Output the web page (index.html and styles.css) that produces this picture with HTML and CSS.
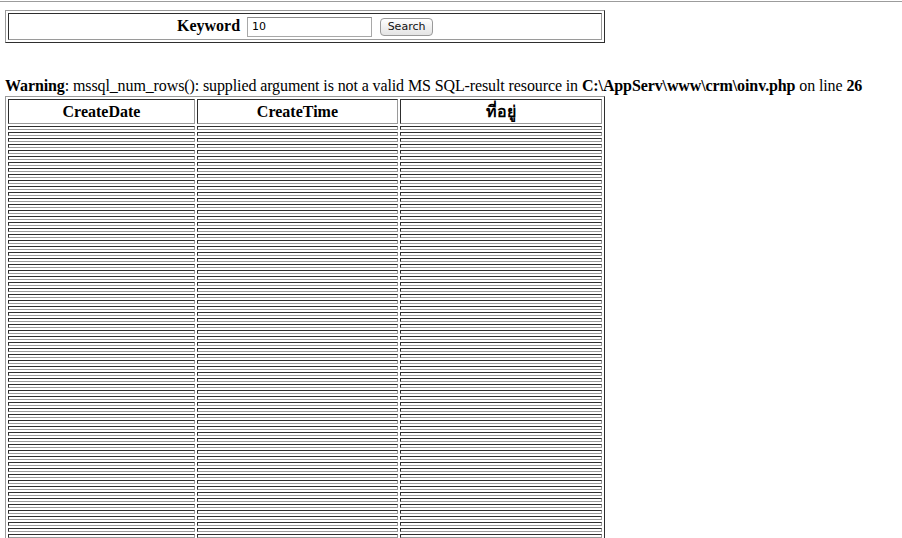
FILE: index.html
```html
<!DOCTYPE html>
<html>
<head>
<meta charset="utf-8">
<link rel="stylesheet" href="styles.css">
</head>
<body>
<div class="topline"></div>
<form class="search">
<table class="frame">
<tr><td class="kw-cell"><b class="kw">Keyword</b> <input class="kw-input" type="text" value="10"> <button class="btn" type="button">Search</button></td></tr>
</table>
</form>
<p class="warn"><b>Warning</b>: mssql_num_rows(): supplied argument is not a valid MS SQL-result resource in <b>C:\AppServ\www\crm\oinv.php</b> on line <b>26</b></p>
<table class="grid">
<tr><th class="c1">CreateDate</th><th class="c2">CreateTime</th><th class="c3">ที่อยู่</th></tr>
<tr><td></td><td></td><td></td></tr><tr><td></td><td></td><td></td></tr><tr><td></td><td></td><td></td></tr><tr><td></td><td></td><td></td></tr><tr><td></td><td></td><td></td></tr>
<tr><td></td><td></td><td></td></tr><tr><td></td><td></td><td></td></tr><tr><td></td><td></td><td></td></tr><tr><td></td><td></td><td></td></tr><tr><td></td><td></td><td></td></tr>
<tr><td></td><td></td><td></td></tr><tr><td></td><td></td><td></td></tr><tr><td></td><td></td><td></td></tr><tr><td></td><td></td><td></td></tr><tr><td></td><td></td><td></td></tr>
<tr><td></td><td></td><td></td></tr><tr><td></td><td></td><td></td></tr><tr><td></td><td></td><td></td></tr><tr><td></td><td></td><td></td></tr><tr><td></td><td></td><td></td></tr>
<tr><td></td><td></td><td></td></tr><tr><td></td><td></td><td></td></tr><tr><td></td><td></td><td></td></tr><tr><td></td><td></td><td></td></tr><tr><td></td><td></td><td></td></tr>
<tr><td></td><td></td><td></td></tr><tr><td></td><td></td><td></td></tr><tr><td></td><td></td><td></td></tr><tr><td></td><td></td><td></td></tr><tr><td></td><td></td><td></td></tr>
<tr><td></td><td></td><td></td></tr><tr><td></td><td></td><td></td></tr><tr><td></td><td></td><td></td></tr><tr><td></td><td></td><td></td></tr><tr><td></td><td></td><td></td></tr>
<tr><td></td><td></td><td></td></tr><tr><td></td><td></td><td></td></tr><tr><td></td><td></td><td></td></tr><tr><td></td><td></td><td></td></tr><tr><td></td><td></td><td></td></tr>
<tr><td></td><td></td><td></td></tr><tr><td></td><td></td><td></td></tr><tr><td></td><td></td><td></td></tr><tr><td></td><td></td><td></td></tr><tr><td></td><td></td><td></td></tr>
<tr><td></td><td></td><td></td></tr><tr><td></td><td></td><td></td></tr><tr><td></td><td></td><td></td></tr><tr><td></td><td></td><td></td></tr><tr><td></td><td></td><td></td></tr>
<tr><td></td><td></td><td></td></tr><tr><td></td><td></td><td></td></tr><tr><td></td><td></td><td></td></tr><tr><td></td><td></td><td></td></tr><tr><td></td><td></td><td></td></tr>
<tr><td></td><td></td><td></td></tr><tr><td></td><td></td><td></td></tr><tr><td></td><td></td><td></td></tr><tr><td></td><td></td><td></td></tr><tr><td></td><td></td><td></td></tr>
<tr><td></td><td></td><td></td></tr><tr><td></td><td></td><td></td></tr><tr><td></td><td></td><td></td></tr><tr><td></td><td></td><td></td></tr><tr><td></td><td></td><td></td></tr>
<tr><td></td><td></td><td></td></tr><tr><td></td><td></td><td></td></tr><tr><td></td><td></td><td></td></tr><tr><td></td><td></td><td></td></tr><tr><td></td><td></td><td></td></tr>
<tr><td></td><td></td><td></td></tr><tr><td></td><td></td><td></td></tr><tr><td></td><td></td><td></td></tr><tr><td></td><td></td><td></td></tr><tr><td></td><td></td><td></td></tr>
</table>
</body>
</html>
```
FILE: styles.css
```css
html, body {
  margin: 0;
  padding: 0;
  background: #ffffff;
}
body {
  font-family: "Liberation Serif", "Times New Roman", serif;
  font-size: 16px;
  color: #000;
  padding: 0 0 0 5px;
}
.topline {
  height: 1px;
  margin: 1px 0 0 -5px;
  background: #9c9c9c;
}
.search {
  margin: 8px 0 0 0;
}
.frame, .grid {
  width: 600px;
  border-collapse: separate;
  border-spacing: 2px;
  border-style: solid;
  border-width: 1px;
  border-color: #9a9a9a #2e2e2e #2e2e2e #9a9a9a;
}
.frame td, .grid td, .grid th {
  padding: 1px;
  border-style: solid;
  border-width: 1px;
  border-color: #2e2e2e #9a9a9a #9a9a9a #2e2e2e;
}
.kw-cell {
  text-align: center;
  height: 23px;
  white-space: nowrap;
}
.kw {
  font-weight: bold;
  vertical-align: middle;
}
.kw-input {
  box-sizing: border-box;
  width: 125px;
  height: 20px;
  margin: 0 4px 0 3px;
  padding: 1px 4px;
  font-family: "DejaVu Sans", sans-serif;
  font-size: 11px;
  border: 1px solid #a8a8a8;
  border-top-color: #8a8a8a;
  vertical-align: middle;
}
.btn {
  box-sizing: border-box;
  height: 18px;
  width: 53px;
  margin: 0;
  padding: 0 5px;
  font-family: "DejaVu Sans", sans-serif;
  font-size: 11px;
  color: #111;
  background: linear-gradient(#ffffff, #f0f0f0 50%, #e4e4e4);
  border: 1px solid #9a9a9a;
  border-radius: 4px;
  vertical-align: middle;
}
.warn {
  margin: 33px 0 0 0;
  line-height: 19px;
  white-space: nowrap;
  letter-spacing: -0.11px;
}
.grid {
  margin-top: 1px;
}
.grid th {
  font-weight: bold;
  height: 21px;
  line-height: 19px;
  text-align: center;
}
.c1 { width: 182px; }
.c2 { width: 196px; }
.c3 { width: 197px; }
.grid td {
  height: 0;
  font-size: 0;
  line-height: 0;
}
```
